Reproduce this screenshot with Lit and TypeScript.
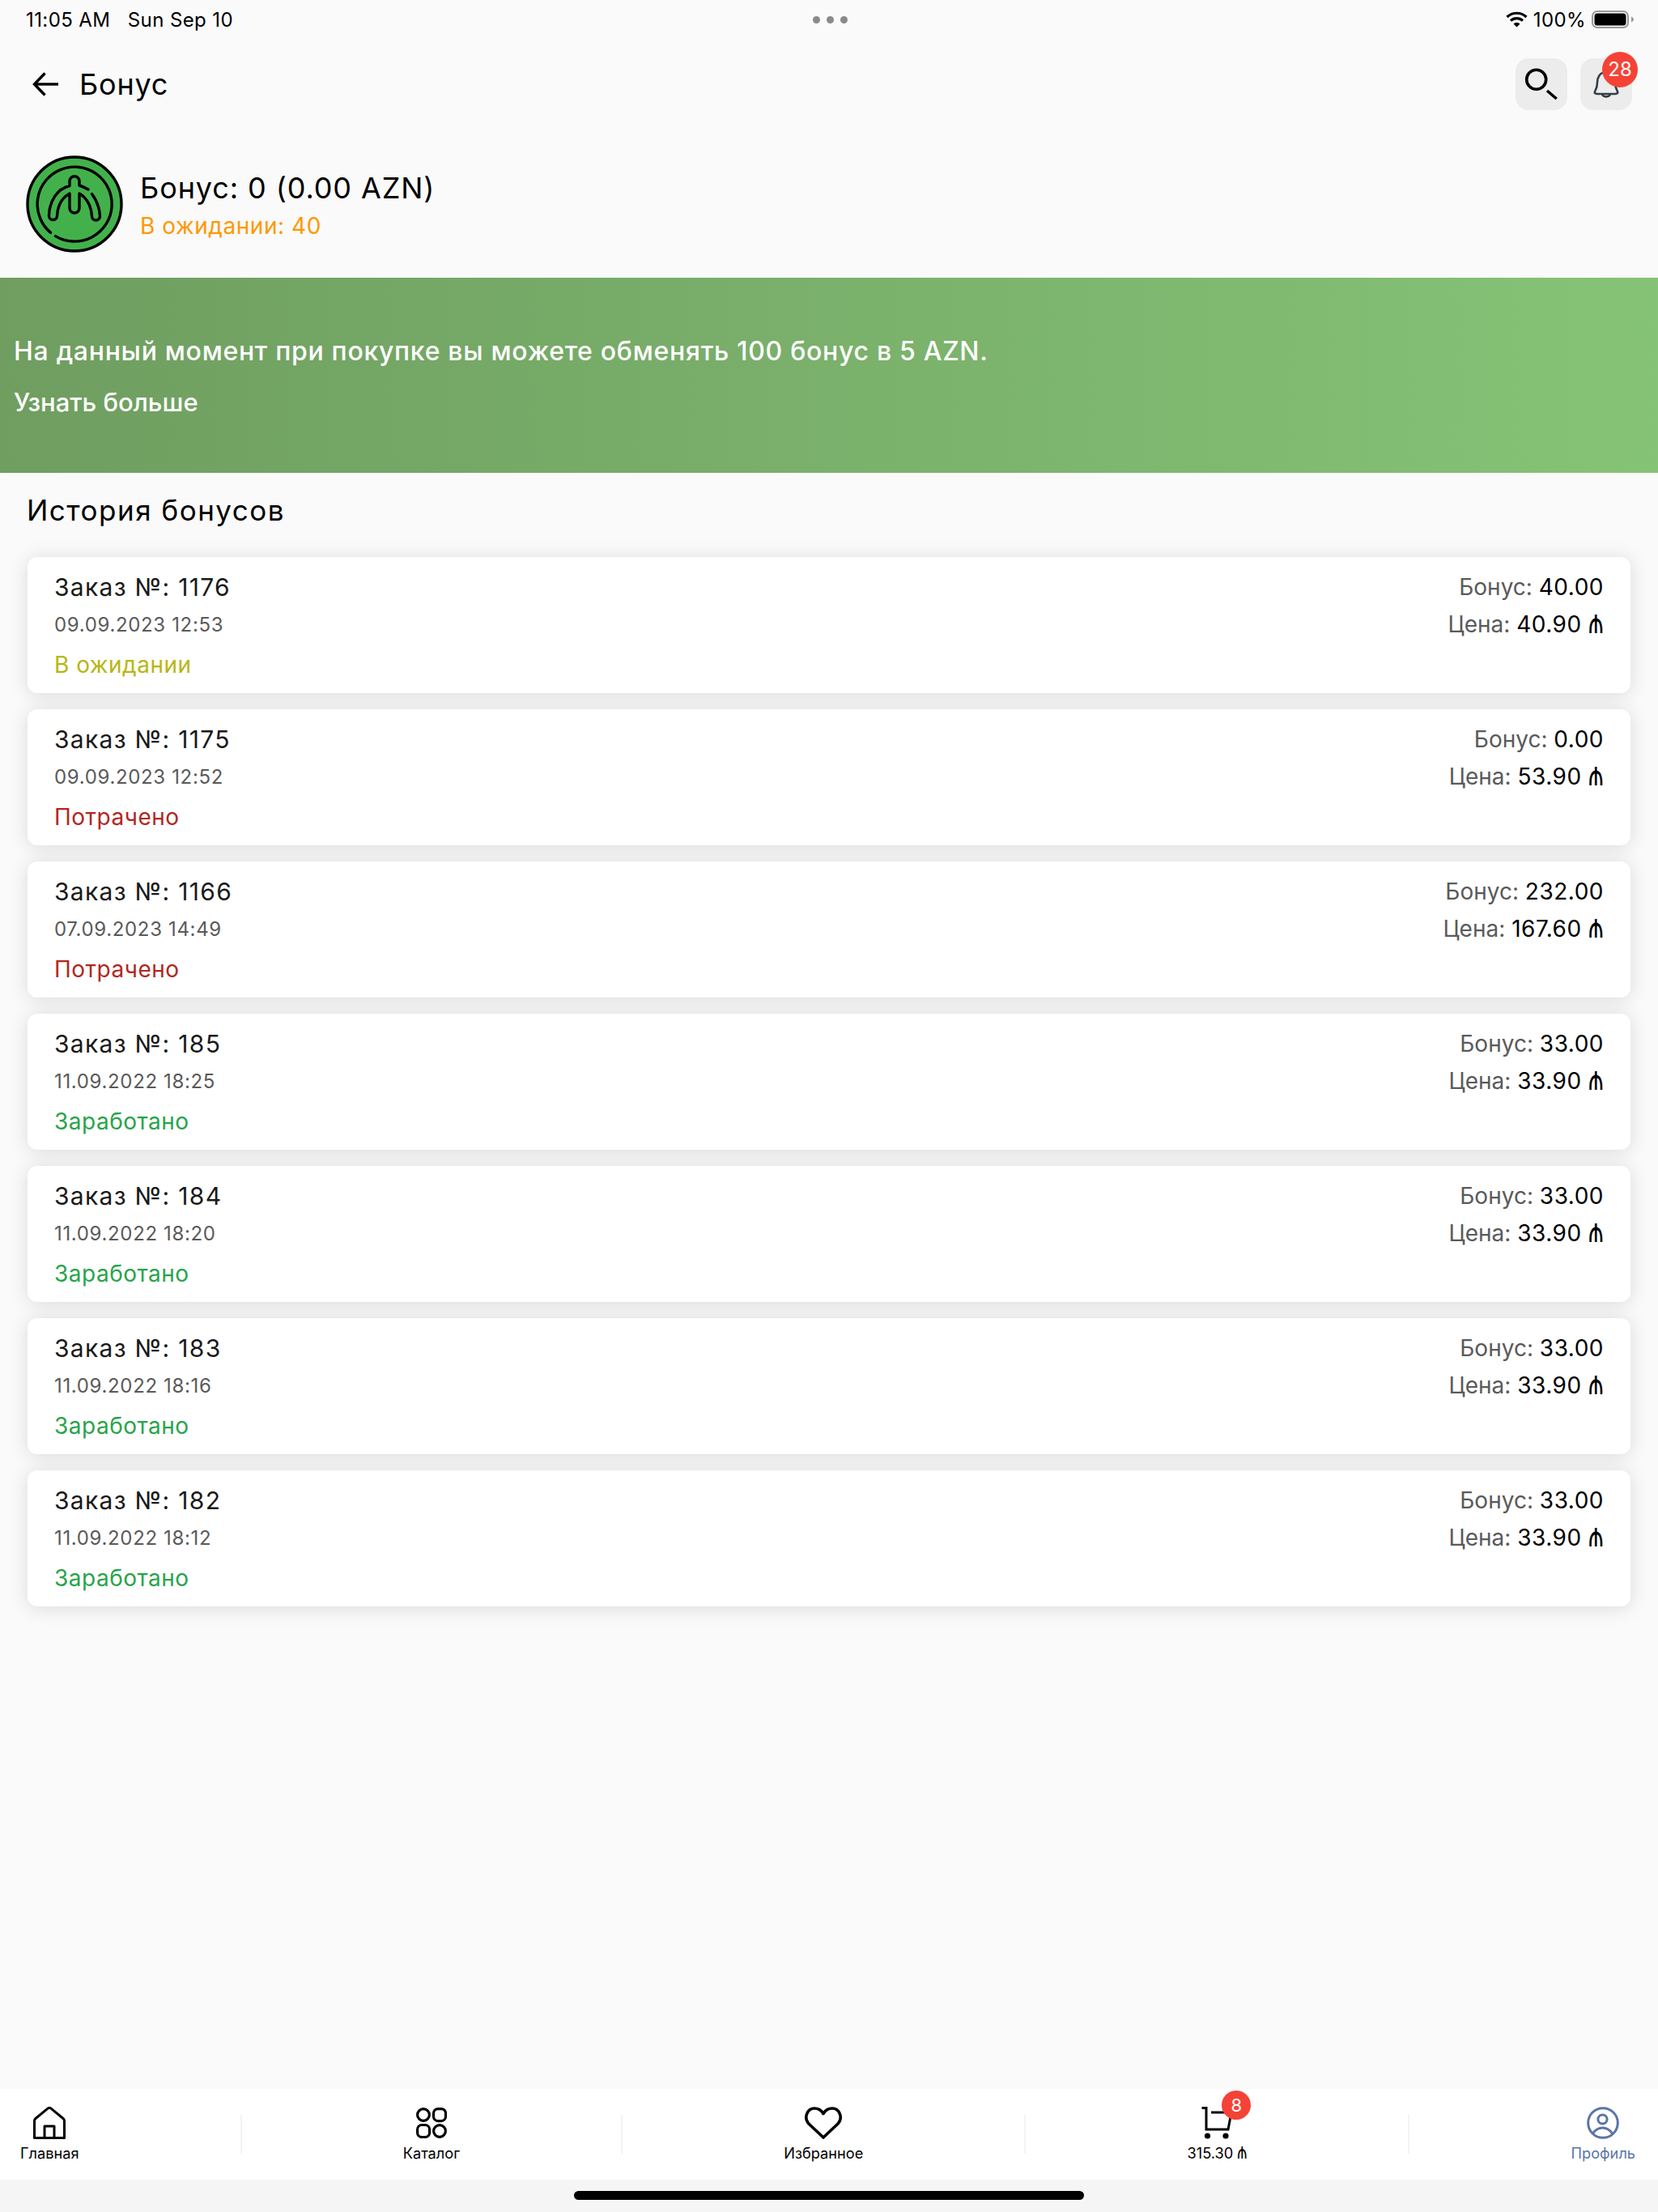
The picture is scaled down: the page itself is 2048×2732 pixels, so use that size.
import { LitElement, html, css, svg } from "lit";
import { customElement } from "lit/decorators.js";

const orders = [
  { no: 1176, date: "09.09.2023 12:53", st: "В ожидании", cls: "wait", bonus: "40.00", price: "40.90" },
  { no: 1175, date: "09.09.2023 12:52", st: "Потрачено", cls: "spent", bonus: "0.00", price: "53.90" },
  { no: 1166, date: "07.09.2023 14:49", st: "Потрачено", cls: "spent", bonus: "232.00", price: "167.60" },
  { no: 185, date: "11.09.2022 18:25", st: "Заработано", cls: "earned", bonus: "33.00", price: "33.90" },
  { no: 184, date: "11.09.2022 18:20", st: "Заработано", cls: "earned", bonus: "33.00", price: "33.90" },
  { no: 183, date: "11.09.2022 18:16", st: "Заработано", cls: "earned", bonus: "33.00", price: "33.90" },
  { no: 182, date: "11.09.2022 18:12", st: "Заработано", cls: "earned", bonus: "33.00", price: "33.90" },
];

const logo = html`<svg class="logo" viewBox="0 0 120 120" fill="none" stroke="#000" stroke-width="3.4" stroke-linecap="round" stroke-linejoin="round">
  <circle cx="60" cy="60" r="58" fill="#43b14b"/>
  <path d="M30.6 95.4A46 46 0 1 1 36.5 99.6"/>
  <path d="M77 42Q71 38.5 66 37V31.7A6 6 0 0 0 54 31.7V37.5C39 41 29 56 28.5 74A5 5 0 0 0 38.5 75C39 62 45 52 54 47V65A6 6 0 0 0 66 65V47C75 52 81 63 81.5 75A5 5 0 0 0 91.5 75C91 65 87 55 81.5 47.5"/>
</svg>`;

const tabIcons = {
  home: svg`<svg class="ti" width="40" height="40" viewBox="0 0 40 40" fill="none" stroke="#000" stroke-width="3" stroke-linejoin="round"><path d="M3 14.5L18 2.2a3 3 0 0 1 4 0L37 14.5a4 4 0 0 1 1.5 3V38.5H1.5V17.5a4 4 0 0 1 1.5-3Z"/><path d="M14 38.5V24H26V38.5"/></svg>`,
  cat: svg`<svg class="ti" width="38" height="38" viewBox="0 0 38 38" fill="none" stroke="#000" stroke-width="3.2"><circle cx="9" cy="9" r="7.4"/><rect x="21.5" y="1.6" width="15" height="15" rx="5.5"/><rect x="1.6" y="21.5" width="15" height="15" rx="5.5"/><circle cx="29" cy="29" r="7.4"/></svg>`,
  heart: svg`<svg class="ti" width="46" height="40" viewBox="0 0 46 40" fill="none" stroke="#000" stroke-width="3.6" stroke-linejoin="round"><path d="M23 38L4.5 20.5C-1 14 2.500 2 12 2C17 2 21 5 23 8.500C25 5 29 2 34 2C43.500 2 47 14 41.500 20.500Z"/></svg>`,
  cart: svg`<svg class="ti" width="38" height="40" viewBox="0 0 38 40" fill="none" stroke="#000" stroke-width="3"><path d="M0.500 1.500H6V28H33L37 7"/><path d="M12 7H30"/><circle cx="7.500" cy="36" r="3.600" fill="#000" stroke="none"/><circle cx="30" cy="36" r="3.600" fill="#000" stroke="none"/></svg>`,
  user: svg`<svg class="ti" width="40" height="40" viewBox="0 0 40 40" fill="none" stroke="#5b75a8" stroke-width="3"><circle cx="20" cy="20" r="18.300"/><circle cx="19.500" cy="15.500" r="5.600"/><path d="M7.500 33C11 28 15 26 19.500 26C24 26 28 28 31.500 33"/></svg>`,
};

@customElement("app-root")
export class AppRoot extends LitElement {
  static styles = css`
    :host {
      display: flex;
      flex-direction: column;
      width: 2048px;
      height: 2732px;
      background: #fafafa;
      font-family: Inter, "Noto Sans", sans-serif;
      color: #000;
      overflow: hidden;
    }
    .status {
      height: 48px;
      flex: none;
      display: grid;
      grid-template-columns: 1fr auto 1fr;
      align-items: center;
      padding: 0 30px 0 32px;
      font-size: 24px;
      letter-spacing: 0.4px;
    }
    .status .time { white-space: pre; }
    .dots { display: flex; gap: 8px; }
    .dots i { width: 9px; height: 9px; border-radius: 50%; background: #8a8a8a; }
    .sys { display: flex; justify-content: flex-end; align-items: center; gap: 7px; }
    .head {
      flex: none;
      height: 64px;
      margin-top: 24px;
      display: flex;
      align-items: center;
      padding: 0 32px 0 40px;
    }
    .head .title { font-size: 36px; margin-left: 26px; letter-spacing: 0.8px; flex: 1; }
    .ib {
      width: 64px;
      height: 64px;
      border-radius: 16px;
      background: #ececec;
      position: relative;
      display: block;
    }
    .ib + .ib { margin-left: 16px; }
    .badge {
      position: absolute;
      background: #f44336;
      color: #fff;
      border-radius: 50%;
      display: flex;
      align-items: center;
      justify-content: center;
    }
    .ib .badge { width: 44px; height: 42px; padding-bottom: 2px; top: -8px; right: -7px; font-size: 24px; }
    .sum {
      flex: none;
      display: flex;
      align-items: center;
      margin-top: 56px;
      padding-left: 32px;
      height: 120px;
    }
    .logo { width: 120px; height: 120px; display: block; margin-right: 21px; }
    .sum .txt { padding-top: 4px; }
    .sum .a { font-size: 36px; letter-spacing: 0.9px; line-height: 44px; }
    .sum .b { font-size: 28px; color: #ff9800; letter-spacing: 0.55px; line-height: 40px; margin-top: 5px; }
    .banner {
      flex: none;
      height: 241px;
      margin-top: 31px;
      box-sizing: border-box;
      background: linear-gradient(90deg, #6f9e60 0%, #85c376 100%);
      color: #fff;
      padding: 0 17px;
      display: flex;
      flex-direction: column;
      justify-content: center;
      font-weight: 500;
    }
    .banner .l1 { font-size: 32px; letter-spacing: 0.7px; line-height: 40px; margin-top: 4px; }
    .banner .l2 { font-size: 31px; line-height: 40px; margin-top: 23px; }
    h2 {
      flex: none;
      margin: 25px 0 0 33px;
      font-size: 35px;
      font-weight: 400;
      letter-spacing: 1.5px;
      line-height: 42px;
    }
    .list {
      flex: 1;
      display: flex;
      flex-direction: column;
      gap: 20px;
      padding: 37px 34px 0;
    }
    .card {
      height: 168px;
      background: #fff;
      border-radius: 12px;
      box-shadow: 0 2px 24px rgba(0,0,0,.13);
      box-sizing: border-box;
      padding: 20px 33px 0;
      display: flex;
      justify-content: space-between;
    }
    .t { font-size: 30px; line-height: 36px; letter-spacing: 1.3px; color: #1a1a1a; margin-top: -1px; }
    .d { font-size: 24px; line-height: 30px; margin-top: 14px; color: #5a5a5a; letter-spacing: 0.65px; }
    .s { font-size: 28px; line-height: 36px; margin-top: 16px; letter-spacing: 0.5px; }
    .wait { color: #b8b614; }
    .spent { color: #b3261e; }
    .earned { color: #28a44a; }
    .r { text-align: right; font-size: 28px; line-height: 36px; color: #5a5a5a; margin-top: -1px; }
    .r .row + .row { margin-top: 10px; }
    .r b { font-weight: 400; color: #000; letter-spacing: 0.5px; }
    .mn {
      font-family: Roboto, sans-serif;
      display: inline-block;
      line-height: 1;
      transform: scaleY(1.5);
      transform-origin: 50% 78%;
    }
    .tabs {
      flex: none;
      height: 112px;
      box-sizing: border-box;
      background: #fff;
      display: flex;
      justify-content: space-between;
      align-items: flex-start;
      padding: 0 28px 0 25px;
    }
    .tab {
      display: flex;
      flex-direction: column;
      align-items: center;
      margin-top: 22px;
      font-size: 18.2px;
      line-height: 22px;
      position: relative;
      white-space: nowrap;
    }
    .tab .ib2 { height: 40px; display: flex; align-items: center; margin-bottom: 6px; position: relative; }
    .tab .on { color: #5b75a8; }
    .tab .badge { width: 36px; height: 36px; top: -20px; right: -23px; font-size: 22px; }
    .sep { width: 2px; height: 48px; margin-top: 32px; background: #f3f3f3; }
    .foot { flex: none; height: 40px; background: #f5f5f5; display: flex; justify-content: center; padding-top: 14px; box-sizing: border-box; }
    .foot i { width: 630px; height: 11px; border-radius: 6px; background: #000; display: block; }
  `;

  render() {
    const m = html`<span class="mn">₼</span>`;
    return html`
      <div class="status">
        <div class="time">11:05 AM   Sun Sep 10</div>
        <div class="dots"><i></i><i></i><i></i></div>
        <div class="sys">
          <svg width="27" height="20" viewBox="0 0 27 20" fill="none" stroke="#000" stroke-width="3.2"><path d="M1.500 7A17.500 17.500 0 0 1 25.500 7"/><path d="M6 11.500A11 11 0 0 1 21 11.500"/><path d="M13.500 19.500L9.500 15.500A5.600 5.600 0 0 1 17.500 15.500Z" fill="#000" stroke="none"/></svg>
          <span>100%</span>
          <svg width="52" height="22" viewBox="0 0 52 22"><rect x="1" y="1" width="44" height="20" rx="6" fill="none" stroke="#999" stroke-width="2"/><rect x="3.500" y="3.500" width="39" height="15" rx="3.500" fill="#000"/><path d="M49 7.500C51 8.500 52 10 52 11C52 12 51 13.500 49 14.500Z" fill="#999"/></svg>
        </div>
      </div>
      <div class="head">
        <svg width="32" height="30" viewBox="0 0 32 30" fill="none" stroke="#000" stroke-width="3.400"><path d="M15.500 1.500L2.500 15L15.500 28.500"/><path d="M3 15H32"/></svg>
        <div class="title">Бонус</div>
        <div class="ib"><svg width="64" height="64" viewBox="0 0 64 64" fill="none" stroke="#000" stroke-width="3.600"><circle cx="25.700" cy="26.300" r="12"/><path d="M39 40L50.700 50"/></svg></div>
        <div class="ib"><svg width="64" height="64" viewBox="0 0 64 64" fill="none" stroke="#333d47" stroke-width="2.600"><path d="M32 17C24 17 21 24 21 30C21 36 19 39 18 41C17 43 19 44 21 44H43C45 44 47 43 46 41C45 39 43 36 43 30C43 24 40 17 32 17Z"/><path d="M27 44C28 48.500 36 48.500 37 44"/></svg><span class="badge">28</span></div>
      </div>
      <div class="sum">
        ${logo}
        <div class="txt">
          <div class="a">Бонус: 0 (0.00 AZN)</div>
          <div class="b">В ожидании: 40</div>
        </div>
      </div>
      <div class="banner">
        <div class="l1">На данный момент при покупке вы можете обменять 100 бонус в 5 AZN.</div>
        <div class="l2">Узнать больше</div>
      </div>
      <h2>История бонусов</h2>
      <div class="list">
        ${orders.map(o => html`
          <div class="card">
            <div>
              <div class="t">Заказ №: ${o.no}</div>
              <div class="d">${o.date}</div>
              <div class="s ${o.cls}">${o.st}</div>
            </div>
            <div class="r">
              <div class="row">Бонус: <b>${o.bonus}</b></div>
              <div class="row">Цена: <b>${o.price} ${m}</b></div>
            </div>
          </div>`)}
      </div>
      <div class="tabs">
        <div class="tab"><div class="ib2">${tabIcons.home}</div>Главная</div>
        <div class="sep"></div>
        <div class="tab"><div class="ib2">${tabIcons.cat}</div>Каталог</div>
        <div class="sep"></div>
        <div class="tab"><div class="ib2">${tabIcons.heart}</div>Избранное</div>
        <div class="sep"></div>
        <div class="tab"><div class="ib2">${tabIcons.cart}<span class="badge">8</span></div><span>315.30 ${m}</span></div>
        <div class="sep"></div>
        <div class="tab"><div class="ib2">${tabIcons.user}</div><span class="on">Профиль</span></div>
      </div>
      <div class="foot"><i></i></div>
    `;
  }
}
